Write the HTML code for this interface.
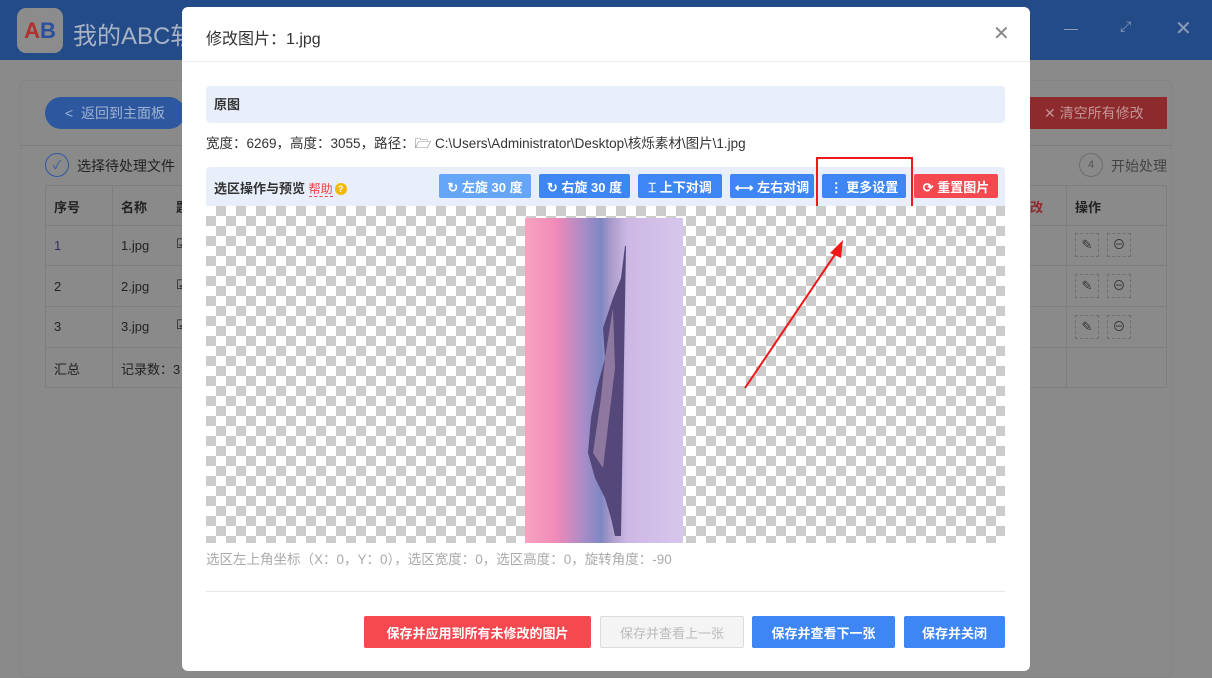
<!DOCTYPE html>
<html><head><meta charset="utf-8"><style>
*{margin:0;padding:0;box-sizing:border-box}
body{width:1212px;height:678px;overflow:hidden;position:relative;background:#8a8a8a;font-family:"Liberation Sans","Noto Sans CJK SC",sans-serif;font-size:13px;color:#333}
.a{position:absolute}
.btn{position:absolute;color:#fff;font-size:13px;display:flex;align-items:center;justify-content:center;border-radius:2px;font-weight:bold}
.chk{background-color:#fff;background-image:linear-gradient(45deg,#ccc 25%,transparent 25%,transparent 75%,#ccc 75%),linear-gradient(45deg,#ccc 25%,transparent 25%,transparent 75%,#ccc 75%);background-size:20px 20px;background-position:0 0,10px 10px}
.cell{position:absolute;font-size:13px;color:#222}
</style></head><body>
<div class="a" style="left:0;top:0;width:1212px;height:60px;background:#234b87"></div>
<div class="a" style="left:17px;top:8px;width:46px;height:45px;border-radius:9px;background:#8c8c8c;display:flex;align-items:center;justify-content:center;font-weight:bold;font-size:22px;color:#2b4fa0"><span style="color:#b0302a">A</span>B</div>
<div class="a" style="left:73px;top:16px;font-size:24px;color:#a9b3c4">我的ABC软</div>
<div class="a" style="left:1064px;top:29px;width:14px;height:1px;background:#8d9cb6"></div>
<div class="a" style="left:1120px;top:18px;color:#8d9cb6;font-size:14px">⤢</div>
<div class="a" style="left:1175px;top:16px;color:#8d9cb6;font-size:20px">✕</div>
<div class="a" style="left:20px;top:80px;width:1152px;height:598px;border:1px solid #848484;border-radius:6px;background:#8a8a8a"></div>
<div class="a" style="left:45px;top:97px;width:140px;height:32px;border-radius:16px;background:#2d58a0;color:#9fb1d0;font-size:14px;padding-left:20px;line-height:32px">&lt;&nbsp;&nbsp;返回到主面板</div>
<div class="a" style="left:1010px;top:97px;width:157px;height:32px;background:#8c2a2d;color:#c49595;font-size:14px;line-height:32px;padding-left:34px">✕ 清空所有修改</div>
<div class="a" style="left:20px;top:145px;width:1152px;height:1px;background:#7e7e7e"></div>
<div class="a" style="left:45px;top:153px;width:24px;height:24px;border:1px solid #2d58a0;border-radius:50%;color:#2d58a0;text-align:center;line-height:22px;font-size:12px">✓</div>
<div class="a" style="left:77px;top:156px;font-size:14px;color:#222">选择待处理文件</div>
<div class="a" style="left:1079px;top:153px;width:24px;height:24px;border:1px solid #6e6e6e;border-radius:50%;color:#555;text-align:center;line-height:22px;font-size:11px">4</div>
<div class="a" style="left:1111px;top:156px;font-size:14px;color:#444">开始处理</div>
<div class="a" style="left:45px;top:185px;width:1122px;height:1px;background:#7e7e7e"></div>
<div class="a" style="left:45px;top:225px;width:1122px;height:1px;background:#7e7e7e"></div>
<div class="a" style="left:45px;top:265px;width:1122px;height:1px;background:#7e7e7e"></div>
<div class="a" style="left:45px;top:306px;width:1122px;height:1px;background:#7e7e7e"></div>
<div class="a" style="left:45px;top:347px;width:1122px;height:1px;background:#7e7e7e"></div>
<div class="a" style="left:45px;top:387px;width:1122px;height:1px;background:#7e7e7e"></div>
<div class="a" style="left:45px;top:185px;width:1px;height:202px;background:#7e7e7e"></div>
<div class="a" style="left:112px;top:185px;width:1px;height:202px;background:#7e7e7e"></div>
<div class="a" style="left:1066px;top:185px;width:1px;height:202px;background:#7e7e7e"></div>
<div class="a" style="left:1166px;top:185px;width:1px;height:202px;background:#7e7e7e"></div>
<div class="cell" style="left:54px;top:197px;font-weight:bold">序号</div><div class="cell" style="left:121px;top:197px;font-weight:bold">名称</div><div class="cell" style="left:176px;top:197px;font-weight:bold">题</div>
<div class="cell" style="left:54px;top:238px;color:#3a2a6a">1</div><div class="cell" style="left:121px;top:238px">1.jpg</div><div class="cell" style="left:176px;top:236px">☑</div>
<div class="cell" style="left:54px;top:279px">2</div><div class="cell" style="left:121px;top:279px">2.jpg</div><div class="cell" style="left:176px;top:277px">☑</div>
<div class="cell" style="left:54px;top:319px">3</div><div class="cell" style="left:121px;top:319px">3.jpg</div><div class="cell" style="left:176px;top:317px">☑</div>
<div class="cell" style="left:54px;top:359px">汇总</div><div class="cell" style="left:121px;top:359px">记录数：3</div>
<div class="cell" style="left:1030px;top:197px;font-weight:bold;color:#8c2a2d">改</div>
<div class="cell" style="left:1075px;top:197px;font-weight:bold">操作</div>
<div class="a" style="left:1075px;top:233px;width:24px;height:24px;border:1px dashed #6e6e6e;text-align:center;line-height:22px">✎</div><div class="a" style="left:1107px;top:233px;width:24px;height:24px;border:1px dashed #6e6e6e;text-align:center;line-height:22px">⊖</div>
<div class="a" style="left:1075px;top:274px;width:24px;height:24px;border:1px dashed #6e6e6e;text-align:center;line-height:22px">✎</div><div class="a" style="left:1107px;top:274px;width:24px;height:24px;border:1px dashed #6e6e6e;text-align:center;line-height:22px">⊖</div>
<div class="a" style="left:1075px;top:315px;width:24px;height:24px;border:1px dashed #6e6e6e;text-align:center;line-height:22px">✎</div><div class="a" style="left:1107px;top:315px;width:24px;height:24px;border:1px dashed #6e6e6e;text-align:center;line-height:22px">⊖</div>

<div class="a" style="left:182px;top:7px;width:848px;height:664px;background:#fff;border-radius:6px"></div>
<div class="a" style="left:206px;top:25px;font-size:16px;color:#333">修改图片：1.jpg</div>
<div class="a" style="left:993px;top:21px;font-size:20px;color:#888">✕</div>
<div class="a" style="left:182px;top:61px;width:848px;height:1px;background:#eee"></div>
<div class="a" style="left:206px;top:86px;width:799px;height:37px;background:#e8effb;border-radius:4px;padding-left:8px;line-height:37px;font-weight:bold;font-size:13px">原图</div>
<div class="a" style="left:206px;top:132px;font-size:13.5px;color:#333">宽度：6269，高度：3055，路径：🗁 C:\Users\Administrator\Desktop\核烁素材\图片\1.jpg</div>
<div class="a" style="left:206px;top:167px;width:799px;height:39px;background:#e8effb;border-radius:4px 4px 0 0"></div>
<div class="a" style="left:214px;top:178px;font-weight:bold;font-size:13px">选区操作与预览 <span style="color:#f04040;font-weight:normal;font-size:12px;border-bottom:1px dashed #f04040">帮助</span><span style="display:inline-block;width:12px;height:12px;border-radius:50%;background:#f5b800;color:#fff;font-size:9px;text-align:center;line-height:12px;vertical-align:1px;margin-left:2px">?</span></div>
<div class="btn" style="left:439px;top:174px;width:92px;height:24px;background:#66a6f8">↻ 左旋 30 度</div>
<div class="btn" style="left:539px;top:174px;width:91px;height:24px;background:#3d86f3">↻ 右旋 30 度</div>
<div class="btn" style="left:638px;top:174px;width:84px;height:24px;background:#3d86f3">⌶ 上下对调</div>
<div class="btn" style="left:730px;top:174px;width:84px;height:24px;background:#3d86f3">⟷ 左右对调</div>
<div class="btn" style="left:822px;top:174px;width:84px;height:24px;background:#3d86f3">⋮ 更多设置</div>
<div class="btn" style="left:914px;top:174px;width:84px;height:24px;background:#f5484f">⟳ 重置图片</div>
<div class="a" style="left:816px;top:157px;width:97px;height:59px;border:2px solid #f01818"></div>
<div class="a chk" style="left:206px;top:206px;width:799px;height:337px"></div>
<div class="a" style="left:525px;top:218px;width:158px;height:325px;background:linear-gradient(90deg,#f7a3bf 0%,#f08ab8 20%,#a58cc8 38%,#7f87c2 48%,#a89ac8 54%,#cdb8e4 65%,#d7c6ec 100%)"></div>
<svg class="a" style="left:525px;top:218px" width="158" height="325"><path d="M100 28 L96 60 L88 80 L78 110 L80 140 L72 170 L66 200 L63 235 L70 260 L80 280 L86 300 L90 318 L96 318 L101 28 Z" fill="#54477a"/><path d="M88 90 L80 140 L76 180 L68 235 L78 250 L84 200 L90 150 Z" fill="#b89ab8" opacity="0.6"/></svg>
<div class="a" style="left:206px;top:548px;font-size:13.5px;color:#aaa">选区左上角坐标（X：0，Y：0），选区宽度：0，选区高度：0，旋转角度：-90</div>
<div class="a" style="left:206px;top:591px;width:799px;height:1px;background:#e6e6e6"></div>
<div class="btn" style="left:364px;top:616px;width:227px;height:32px;background:#f5484f">保存并应用到所有未修改的图片</div>
<div class="btn" style="left:600px;top:616px;width:144px;height:32px;background:#f4f4f4;border:1px solid #ddd;color:#bbb;font-weight:normal">保存并查看上一张</div>
<div class="btn" style="left:752px;top:616px;width:143px;height:32px;background:#3d86f3">保存并查看下一张</div>
<div class="btn" style="left:904px;top:616px;width:101px;height:32px;background:#3d86f3">保存并关闭</div>
<svg class="a" style="left:0;top:0" width="1212" height="678"><line x1="745" y1="388" x2="838" y2="250" stroke="#f01818" stroke-width="2"/><polygon points="843,240 830,253 841,258" fill="#f01818"/></svg>
</body></html>
